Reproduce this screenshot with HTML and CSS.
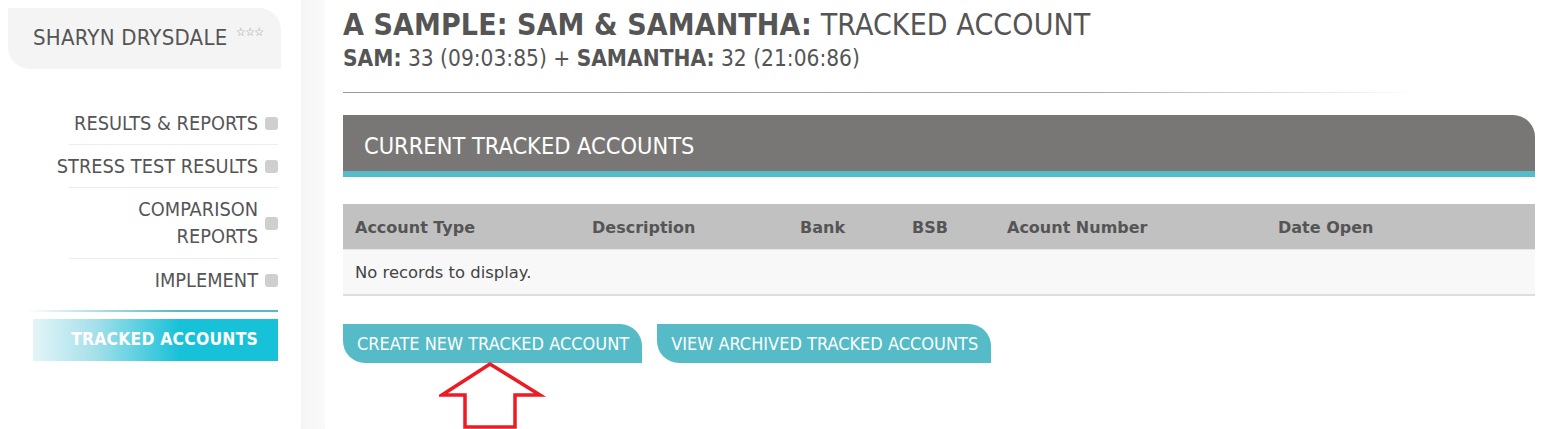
FILE: index.html
```html
<!DOCTYPE html>
<html>
<head>
<meta charset="utf-8">
<link rel="stylesheet" href="styles.css">
</head>
<body>
<div class="page">
  <aside class="sidebar">
    <div class="user-box">SHARYN DRYSDALE <span class="stars">☆☆☆</span></div>
    <nav class="nav">
      <a class="nav-item"><span class="nav-label">RESULTS &amp; REPORTS</span><span class="nav-dot"></span></a>
      <a class="nav-item"><span class="nav-label">STRESS TEST RESULTS</span><span class="nav-dot"></span></a>
      <a class="nav-item double"><span class="nav-label">COMPARISON<br>REPORTS</span><span class="nav-dot"></span></a>
      <a class="nav-item last"><span class="nav-label">IMPLEMENT</span><span class="nav-dot"></span></a>
      <div class="nav-rule"></div>
      <a class="nav-active">TRACKED ACCOUNTS</a>
    </nav>
  </aside>
  <div class="shade"></div>
  <main class="main">
    <h1 class="title"><b>A SAMPLE: SAM &amp; SAMANTHA:</b> TRACKED ACCOUNT</h1>
    <div class="subtitle"><b>SAM:</b> 33 (09:03:85) + <b>SAMANTHA:</b> 32 (21:06:86)</div>
    <div class="rule"></div>
    <section class="panel">
      <div class="panel-head">CURRENT TRACKED ACCOUNTS</div>
      <table class="grid">
        <thead>
          <tr>
            <th class="c1">Account Type</th>
            <th class="c2">Description</th>
            <th class="c3">Bank</th>
            <th class="c4">BSB</th>
            <th class="c5">Acount Number</th>
            <th class="c6">Date Open</th>
          </tr>
        </thead>
        <tbody>
          <tr><td colspan="6">No records to display.</td></tr>
        </tbody>
      </table>
      <div class="actions">
        <a class="btn">CREATE NEW TRACKED ACCOUNT</a>
        <a class="btn">VIEW ARCHIVED TRACKED ACCOUNTS</a>
        <svg class="arrow" width="110" height="70" viewBox="0 0 110 70">
          <path d="M51 3 L3 34 L26 34 L26 66 L76 66 L76 34 L101 34 Z" fill="none" stroke="#ec1c24" stroke-width="3.5" stroke-linejoin="miter"/>
        </svg>
      </div>
    </section>
  </main>
</div>
</body>
</html>
```
FILE: styles.css
```css
* { box-sizing: border-box; }
html, body { margin: 0; padding: 0; background: #fff; }
body { font-family: "DejaVu Sans Condensed", "DejaVu Sans", sans-serif; color: #555; overflow: hidden; }

.page { display: flex; width: 1546px; height: 429px; }

.sidebar { width: 301px; flex: none; padding: 8px 0 0 8px; }
.user-box {
  width: 273px; height: 61px;
  background: #f4f4f4;
  border-radius: 0 22px 0 22px;
  padding: 17px 0 0 25px;
  font-size: 22px; color: #555; letter-spacing: 0.25px;
  white-space: nowrap;
}
.stars { font-size: 12px; color: #999; vertical-align: 9px; letter-spacing: -0.5px; margin-left: 2px; }

.nav { display: flex; flex-direction: column; align-items: flex-end; width: 270px; margin-top: 33px; }
.nav-item {
  display: flex; align-items: center; justify-content: flex-end;
  width: 209px; padding: 8px 0 7px;
  border-bottom: 1px solid #ececec;
  font-size: 19.8px; color: #555; text-align: right; line-height: 27px;
}
.nav-item.double { padding: 8px 0 8px; }
.nav-item.last { border-bottom: none; }
.nav-label { display: block; white-space: nowrap; flex: none; }
.nav-dot { width: 13px; height: 13px; border-radius: 3px; background: #cfcfcf; margin-left: 7px; flex: none; }
.nav-rule { width: 252px; height: 2px; margin-top: 9px; background: linear-gradient(to right, rgba(85,187,198,0), #55bbc6 60%); }
.nav-active {
  display: block; width: 245px; height: 42px; margin-top: 7px;
  background: linear-gradient(to right, #e3f5f8 0%, #a6e0ea 25%, #17c1d8 60%, #17c1d8 100%);
  color: #fff; font-weight: bold; font-size: 17.4px; text-align: right;
  padding: 10px 20px 0 0; letter-spacing: 0.2px;
}

.shade { width: 24px; flex: none; background: linear-gradient(to right, #f5f5f5, #fafafa); }

.main { flex: 1; padding: 6px 11px 0 18px; }
.title { margin: 0; font-size: 30px; font-weight: normal; line-height: 38px; color: #555; letter-spacing: 0.1px; }
.title b { font-weight: bold; }
.subtitle { font-size: 22.5px; line-height: 26px; color: #555; margin-top: 1px; }
.rule { height: 1px; width: 1077px; margin-top: 21px; background: linear-gradient(to right, #999 0%, #aaa 70%, rgba(220,220,220,0) 100%); }

.panel { margin-top: 22px; }
.panel-head {
  height: 62px; background: #797775;
  border-top-right-radius: 22px;
  border-bottom: 6px solid #55bbc6;
  color: #fff; font-size: 23.4px; padding: 17px 0 0 21px;
}

.grid { width: 100%; border-collapse: collapse; margin-top: 27px; font-family: "DejaVu Sans", Verdana, sans-serif; }
.grid th { background: #c1c1c1; color: #555; font-size: 16px; text-align: left; height: 45px; padding: 3px 0 0 12px; font-weight: bold; }
.grid td { background: #f8f8f8; color: #444; font-size: 16.4px; height: 46px; padding: 2px 0 0 12px; border-top: 1px solid #e6e6e6; border-bottom: 2px solid #dedede; }
.c1 { width: 237px; } .c2 { width: 208px; } .c3 { width: 112px; } .c4 { width: 95px; } .c5 { width: 271px; }

.actions { display: flex; gap: 15px; margin-top: 28px; position: relative; }
.btn {
  display: block; height: 39px; background: #55bbc6; color: #fff;
  font-size: 18px; padding: 9px 13px 0 14px;
  border-radius: 0 22px 0 22px; white-space: nowrap;
}
.arrow { position: absolute; left: 96px; top: 37px; }
```
